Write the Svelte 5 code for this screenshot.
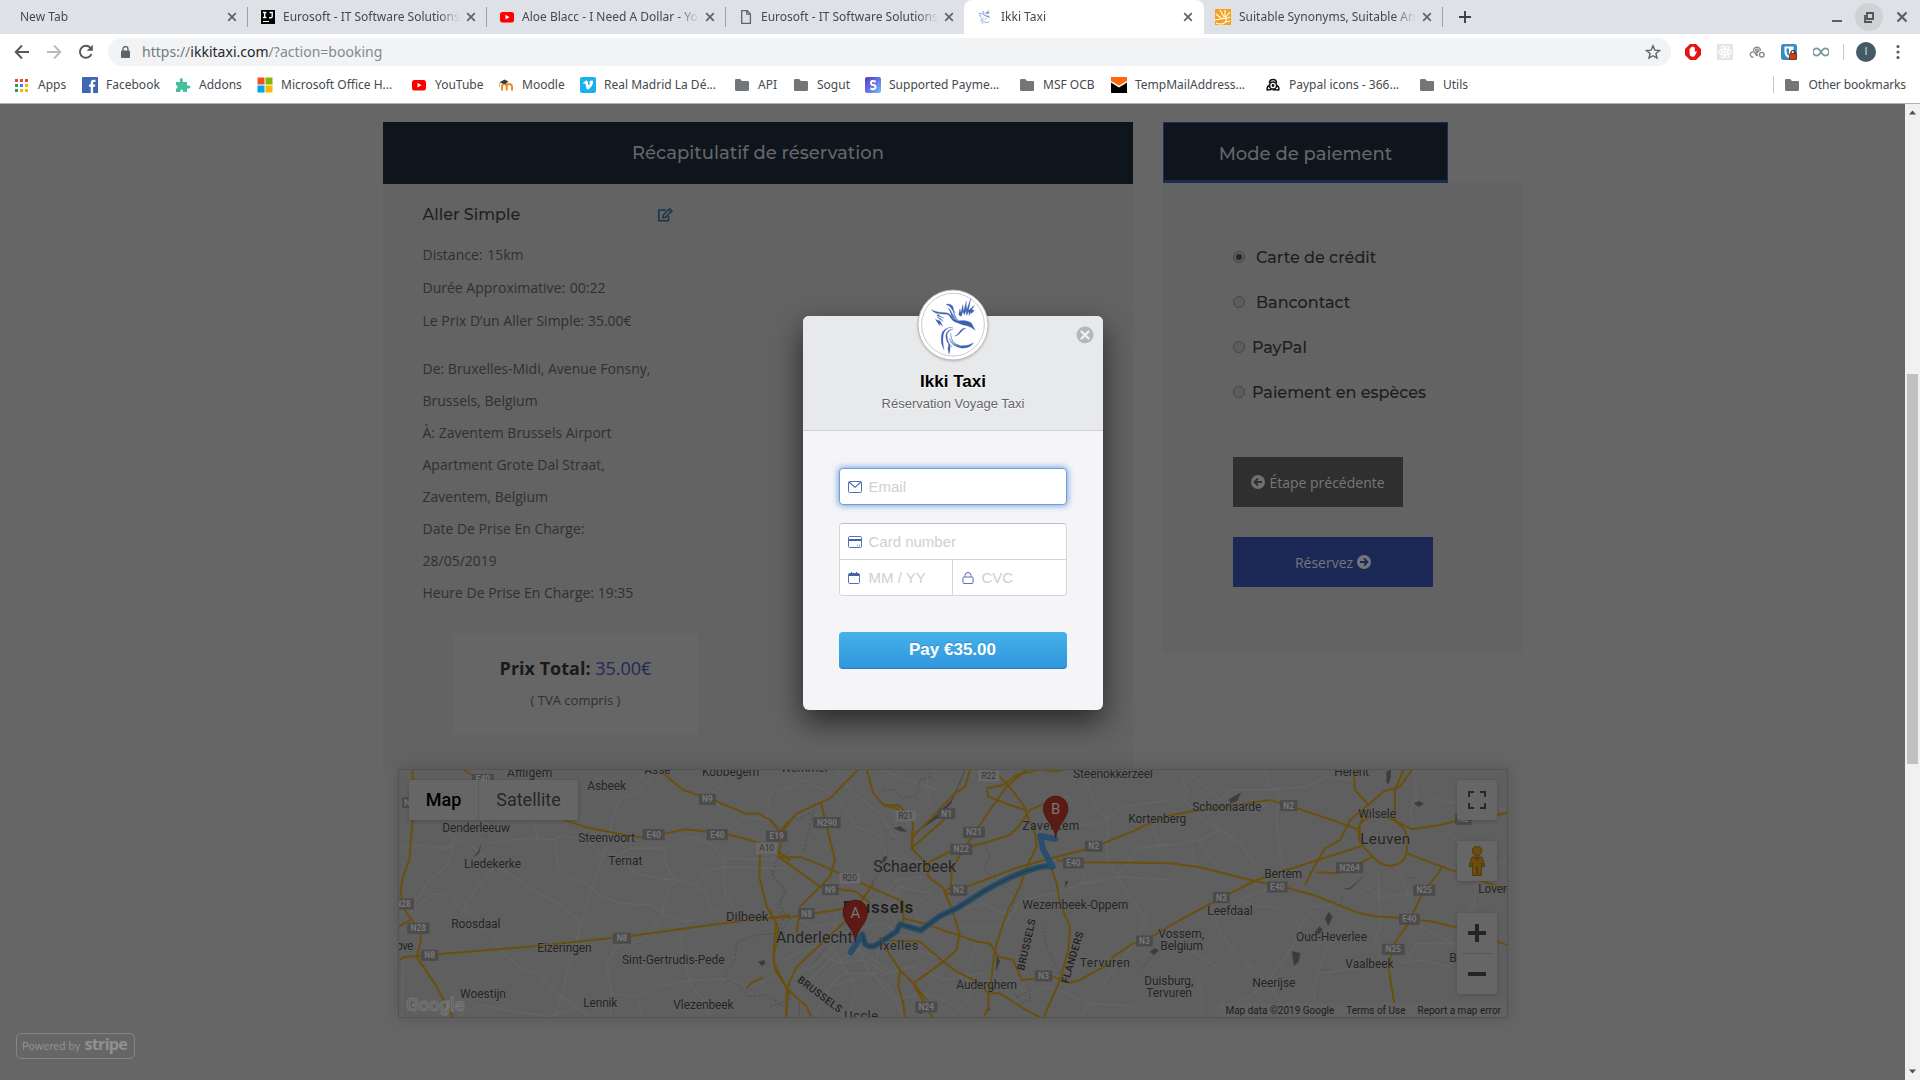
<script>
  const tabs = [
    { title: 'New Tab', icon: '' },
    { title: 'Eurosoft - IT Software Solutions a', icon: 'ij' },
    { title: 'Aloe Blacc - I Need A Dollar - You', icon: 'youtube' },
    { title: 'Eurosoft - IT Software Solutions a', icon: 'page' },
    { title: 'Ikki Taxi', icon: 'bird', active: true },
    { title: 'Suitable Synonyms, Suitable Ant', icon: 'sun' }
  ];

  const bookmarks = [
    { label: 'Apps', icon: 'apps', width: 68 },
    { label: 'Facebook', icon: 'facebook', width: 93 },
    { label: 'Addons', icon: 'puzzle', width: 82 },
    { label: 'Microsoft Office H...', icon: 'ms', width: 154 },
    { label: 'YouTube', icon: 'youtube', width: 87 },
    { label: 'Moodle', icon: 'moodle', width: 82 },
    { label: 'Real Madrid La Dé...', icon: 'vimeo', width: 154 },
    { label: 'API', icon: 'folder', width: 59 },
    { label: 'Sogut', icon: 'folder', width: 72 },
    { label: 'Supported Payme...', icon: 'stripe', width: 154 },
    { label: 'MSF OCB', icon: 'folder', width: 92 },
    { label: 'TempMailAddress...', icon: 'mail', width: 154 },
    { label: 'Paypal icons - 366...', icon: 'eye', width: 154 },
    { label: 'Utils', icon: 'folder', width: 60 }
  ];

  const trip = ['Distance:\u200415km', 'Durée Approximative:\u200400:22', 'Le Prix D’un Aller Simple: 35.00€'];
  const address = [
    'De: Bruxelles-Midi, Avenue Fonsny,',
    'Brussels, Belgium',
    'À: Zaventem Brussels Airport',
    'Apartment Grote Dal Straat,',
    'Zaventem, Belgium',
    'Date De Prise En Charge:',
    '28/05/2019',
    'Heure De Prise En Charge: 19:35'
  ];
  const methods = [
    { name: 'Carte de crédit', checked: true, wide: true },
    { name: 'Bancontact', wide: true },
    { name: 'PayPal' },
    { name: 'Paiement en espèces' }
  ];

  // The map is drawn as three sheets, each in thirds of a pixel.
  // label: [text, x, baseline, width, size]; shield: [text, centre x, centre y, width, light?]
  const sheets = [
    {
      x: 390, y: 760,
      minor: [
        'M790 45L740 100L690 120L670 170L640 290L600 400L560 540L520 680L495 775',
        'M130 260L185 262L195 235L160 210', 'M30 262L90 255L160 268L190 255', 'M195 235L250 262L300 310L360 340L400 370L460 410L510 430L575 490L560 540',
        'M300 250L350 240L440 235L432 180', 'M440 235L490 240L520 225L600 245L640 290', 'M495 240L505 320L540 355L590 370L630 405L690 430L780 435L820 460L880 485L920 480',
        'M640 270L700 310L740 340L800 355L850 360', 'M640 265L680 285L720 265L820 265L900 230L960 250L1000 295L1200 300', 'M820 265L830 320L855 360L910 370L950 400L960 440L1010 480',
        'M855 360L820 430L815 470L760 540L680 560L650 610L665 700L660 775', 'M910 380L950 335L1000 320L1190 325', 'M1000 295L1005 400L1035 450', 'M240 460L225 435L260 385L320 310',
        'M190 260L175 310L110 370L80 420L60 460', 'M80 440L130 402L180 404L210 440L235 465L310 530L340 580L400 630L440 640L500 700L560 740L600 775', 'M660 700L740 710L800 680L870 665L1000 655L1080 680L1190 640',
        'M740 710L760 775', 'M870 520L880 600L905 680L940 720L960 775', 'M770 35L740 60', 'M980 30L1000 70L960 110L1000 150', 'M1190 80L1140 100L1130 180L1060 170L1010 210', 'M200 770L270 735L380 755L480 770L560 740', 'M40 600L35 775'
      ],
      roads: [
        'M68 28L68 180L58 300L36 360L32 400L45 450L65 480L92 515L92 545L80 590L140 680L190 775', 'M26 500L65 478', 'M26 602L40 592L80 588', 'M80 588L440 558L720 528L1000 490L1200 466', 'M220 28L250 48L330 85L430 140L520 178L580 200L690 222L750 232L790 228L885 208L1000 220L1060 235L1110 250L1160 270L1200 303',
        'M820 40L840 58L880 90L975 122L1070 162L1105 160L1140 180L1170 215L1200 180', 'M1110 280L1108 350L1130 440L1160 490L1165 520L1150 590L1155 630L1195 690L1188 775', 'M1070 684L1085 668L1118 652'
      ],
      dashes: ['M1200 275L1160 300L1145 350L1190 390L1160 440L1180 480L1160 520L1100 525L1040 545L1035 600L1000 650L1050 680L1070 710L1130 705L1180 740'],
      lakes: ['M1105 605l18-4 2 10-10 6z', 'M1130 610l10 8', 'M250 292l16-18 6-18-4 22z', 'M285 232l10-14', 'M305 195l8-14'],
      labels: [
        ['Affligem', 351, 52, 136, 36], ['Asse', 763, 42, 79, 36], ['Kobbegem', 936, 49, 172, 36], ['Asbeek', 592, 91, 116, 36], ['Denderleeuw', 157, 217, 203, 36],
        ['Steenvoort', 565, 247, 170, 36], ['Liedekerke', 222, 325, 171, 36], ['Ternat', 655, 315, 102, 36], ['Roosdaal', 184, 505, 147, 36], ['Dilbeek', 1008, 483, 127, 39], ['ove', 18, 569, 52, 36],
        ['Eizeringen', 442, 575, 163, 36], ['Sint-Gertrudis-Pede', 696, 613, 308, 36], ['Woestijn', 210, 715, 138, 36], ['Lennik', 580, 742, 102, 36], ['Vlezenbeek', 850, 748, 181, 36]
      ],
      shields: [['E40', 279, 58, 66], ['N9', 952, 118, 50], ['E40', 791, 224, 66], ['E40', 982, 224, 64], ['E19', 1160, 229, 64], ['A10', 1130, 265, 64, true], ['N28', 66, 128, 60], ['N28', 39, 432, 66], ['N28', 85, 505, 66], ['N8', 119, 586, 52], ['N8', 696, 535, 54]]
    },
    {
      x: 770, y: 760,
      minor: [
        'M30 100L100 60L200 110L260 200L330 230L350 290L470 310', 'M200 28L240 90L330 160L380 240', 'M150 380L230 430L330 420L380 360L460 350', 'M40 600L130 560L200 610L280 600L350 640L430 620L520 660L640 640', 'M120 660L200 580L260 690L230 775', 'M260 560L300 640L360 680L400 775',
        'M300 640L180 680L130 775', 'M330 550L310 640L370 720L470 700L560 740', 'M480 400L430 440L450 490', 'M560 450L640 430L700 460L760 420L850 400L940 370L1040 350L1200 360', 'M930 320L950 370L1040 350L1010 280L1015 180L970 130L940 28', 'M1040 350L1100 270L1180 250',
        'M1040 350L1130 480L1080 570L990 680', 'M870 130l20-25 15 20-20 25', 'M620 550L590 640L600 720L540 775', 'M700 660L780 700L840 680L960 730L1100 740', 'M960 730L930 775', 'M470 60L480 130L410 200', 'M330 28L420 60L500 90', 'M160 700L220 640L330 640', 'M420 560L520 600L560 570', 'M570 500L700 500L740 440', 'M870 200L990 190L1060 140L1200 120',
        'M400 370L370 430L300 450L260 520L150 550', 'M200 460L190 560L130 620L60 650', 'M380 490L350 430L390 380L480 400', 'M220 520L330 490L380 510', 'M180 620L270 570L370 640L420 620', 'M60 470L130 500L200 490'
      ],
      roads: [
        'M0 475L70 470L215 447L270 430', 'M265 28L180 115L80 160L40 210L25 290L95 340L150 380L260 395L300 430', 'M0 180L20 200', 'M25 292L95 292L170 322L270 368L400 425L400 485', 'M152 125L170 200L195 300L180 350L90 440L80 520', 'M0 450L18 490L12 560L12 610L50 685L110 740L125 775', 'M48 775L50 685L80 620L240 470L290 400L310 370',
        'M290 28L310 100L340 135L380 145L430 190L425 240L430 270L470 310L475 350L520 385L550 460L568 520L560 570L520 605L430 670L440 690L490 775', 'M600 28L585 80L555 100L425 235', 'M425 265L555 150', 'M770 28L710 80L660 150L570 285L545 330L542 380L525 395', 'M475 308L540 275L640 250L720 225L745 200L780 150L820 132',
        'M650 90L655 110L720 135L765 150L795 220L800 260L770 320L750 380L710 460L680 550L670 600L665 650L655 700L655 740L640 775', 'M670 28L730 95L770 150', 'M650 85L700 75L740 45L810 28', 'M810 28L860 35L880 28', 'M525 405L590 380L750 320L860 290L960 265L1000 250L1110 205', 'M860 300L900 307L1110 308',
        'M400 475L460 490L620 545L660 550L685 590L730 600L755 660L800 655L850 650L900 668L930 660L1020 610L1030 590L1090 550L1145 532', 'M330 530L350 570L390 630L385 680L400 730L405 775', 'M390 630L430 670L470 720', 'M340 540L450 545L520 605L560 635L620 665L655 700L690 700L760 745L815 775', 'M845 325L860 370L870 430L900 500L895 570L870 660L820 775',
        'M430 200L425 270', 'M340 135L385 135L430 180'
      ],
      dashes: ['M0 330L45 390L30 440L60 480L20 520L0 540', 'M340 90L370 90L400 115L440 105L450 60L480 50L480 28', 'M640 250L660 290L640 330L690 370L740 410L720 460', 'M820 500L830 560L870 640', 'M80 180L130 155L100 280', 'M740 710L780 690L780 720L750 730', 'M0 740L60 720L60 660'],
      lakes: ['M372 205l20-6 18 16-20-2z', 'M585 30l-42 100-40 44-68 44 64-52 48-48z', 'M130 612l40-52', 'M338 322l-34 52', 'M352 288l-12 4-4 18 10-6z', 'M680 590l10 12-12 30z', 'M340 214l12 2M365 236l12 2', 'M735 705l10 14M886 382l8-18h-8z', 'M655 735l4 16-6 2zM88 720v54', 'M440 755l20 2-10 4z', 'M650 552l14 6'],
      labels: [
        ['Wemmel', 32, 36, 140, 36], ['Steenokkerzeel', 909, 55, 240, 36], ['Schaerbeek', 310, 337, 248, 48], ['Zaventem', 757, 211, 171, 36], ['Kortenberg', 1075, 190, 174, 36], ['Anderlecht', 18, 550, 230, 47], ['Ixelles', 328, 571, 117, 38],
        ['Wezembeek-Oppem', 757, 448, 318, 36], ['Auderghem', 559, 688, 182, 36], ['Tervuren', 929, 622, 151, 36], ['Uccle', 223, 780, 101, 38]
      ],
      shields: [['N290', 171, 188, 82], ['R21', 407, 168, 62, true], ['N1', 530, 161, 52], ['R22', 656, 48, 64, true], ['N21', 612, 217, 66], ['N22', 574, 268, 66], ['N2', 971, 259, 52], ['E40', 910, 309, 62], ['R20', 239, 355, 62, true], ['N9', 181, 389, 50], ['N2', 566, 391, 52], ['N8', 110, 461, 48], ['N3', 821, 648, 52], ['N3', 1123, 543, 50], ['N24', 469, 741, 66]],
      route: true
    },
    {
      x: 1140, y: 760,
      minor: [
        'M145 30L125 65L145 90L135 120L180 170L270 230L300 250L350 320', 'M150 40L240 120L270 90L380 90L500 80L560 50L640 60', 'M375 30L395 80L415 90L410 180L420 280L435 340', 'M395 120L330 170L270 230', 'M0 260L100 255L175 240L240 210L270 230', 'M175 240L210 290L250 340', 'M35 200L55 240L50 260', 'M155 250L165 330',
        'M300 420L350 440L410 440L480 500L460 560L400 640L380 665L430 740L430 775', 'M300 420L350 400L400 380', 'M225 470L240 520L290 580L380 665L330 710L250 740L215 775', 'M120 540L180 590L230 620', 'M170 640L185 700L185 775', 'M620 500L560 560L540 620L520 680L530 775', 'M540 640L640 625L700 620', 'M715 340L720 500L700 560', 'M770 320L790 360L820 440', 'M840 500L940 550L1000 540', 'M805 590L830 550L930 550L1000 580',
        'M780 610L850 600L930 620', 'M870 110L920 130L990 120L1100 150', 'M820 30L830 100L810 160L820 200', 'M1010 370L1000 440L960 500L950 560', 'M930 220L1000 300L1100 310', 'M640 420L680 380L720 410L840 400', 'M480 500L520 440L600 430'
      ],
      roads: [
        'M-10 207L30 190L80 168L150 155L390 120L475 145L660 210', 'M-10 308L90 310L180 322L340 362L430 380L520 405L660 460L700 468L790 475L880 485L960 505L1110 558', 'M30 533L120 480L270 400L350 360L440 330L540 298L665 258', 'M640 30L645 90L685 135', 'M815 30L780 80L730 95L690 130L630 180L600 240L555 265L520 325L495 375', 'M790 30L765 90L765 180', 'M530 337L590 340L700 290',
        'M680 150C650 200 640 240 690 280C730 340 800 320 800 270C810 220 790 190 740 170', 'M660 190L690 170', 'M740 170L780 190L815 208L900 195L950 182L1110 158', 'M800 280L905 320L960 340L1110 392', 'M905 320L895 340L850 395L805 490L760 555L745 620L770 775', 'M660 200L660 250'
      ],
      dashes: [],
      lakes: ['M268 118l34-20-10 24-20 8z', 'M740 35l12-5v18l-6 24-6-4z', 'M822 130l14-6 14 6-12 10z', 'M456 574l24 6-4 26-14 10z', 'M555 475l12-18 10 14-12 26z', 'M525 515l14-16 8 12-10 12z', 'M30 575l14-10 12 6-14 14z', 'M610 388l20-4 38-34-36 36z', 'M600 435l8-26M810 352l20 2M540 632l30-4M0 630l40-42'],
      labels: [
        ['Schoonaarde', 157, 154, 207, 36], ['Herent', 583, 47, 104, 36], ['Wilsele', 655, 174, 113, 36], ['Leuven', 661, 253, 150, 46], ['Bertem', 373, 355, 113, 36], ['Leefdaal', 202, 465, 136, 36], ['Vossem,', 55, 535, 137, 36], ['Belgium', 61, 571, 128, 36],
        ['Oud-Heverlee', 468, 543, 213, 36], ['Vaalbeek', 616, 624, 145, 36], ['Neerijse', 337, 682, 129, 36], ['Duisburg,', 13, 676, 147, 36], ['Tervuren', 19, 712, 137, 36], ['Lovenjoel', 1015, 400, 148, 36], ['Bierbeek', 928, 607, 135, 36]
      ],
      shields: [['N2', 446, 137, 52], ['N264', 629, 323, 82], ['E40', 412, 381, 62], ['N3', 244, 413, 50], ['N25', 853, 391, 66], ['E40', 808, 478, 62], ['N25', 760, 568, 68], ['N2', 970, 178, 50]]
    }
  ];
</script>

{#snippet bird()}
  <g fill="#3f5fb0" stroke="#3f5fb0" stroke-width=".8" stroke-linejoin="round">
    <path d="M423 90Q442 99 468 99Q480 101 487 112Q493 122 506 123Q522 120 538 126Q546 129 548 136L556 152Q544 142 534 139Q516 136 502 129Q488 126 482 114Q477 104 468 103Q452 104 438 99Q452 112 462 115L440 108L447 105Q430 98 423 90z" />
    <path d="M436 119l14 5 8 15-11-8 2 8zM440 111q12 4 20 14l-12-7z" />
    <path d="M468 73Q486 71 490 84Q488 90 495 99Q487 94 483 84Q477 76 468 73zM474 84Q484 90 488 104Q493 116 506 122Q490 118 484 106Q481 94 474 84zM490 92q3 14 10 24q-10-8-10-24z" />
    <path d="M506 105l4-18 3 12 6-25 2 22 8-32 1 27 13-36-7 37 18-16-8 14 8 2-9 9-2-4-5 11-1-13-7 12-1-15-6 13-4-10-5 15z" />
    <path d="M494 170Q504 166 512 152Q518 144 528 146Q517 150 512 159Q505 169 494 170z" />
    <path d="M488 143Q466 142 460 164Q456 184 462 211Q450 190 454 166Q460 142 488 143z" />
    <path d="M490 148Q474 152 471 166Q470 186 486 203Q467 190 467 168Q472 148 490 148zM482 160Q482 192 512 199Q536 200 551 190Q542 207 514 206Q484 200 478 176Q488 198 512 202Q480 192 482 160z" />
    <path d="M476 192q8 12 1 32q-6-16-1-32z" />
  </g>
{/snippet}

{#snippet icon(name)}
  <svg class="fav" viewBox="0 0 16 16">
    {#if name === 'ij'}
      <rect x="1" y="1" width="14" height="14" fill="#000" /><path d="M3 3.500h3.400M4.700 3.500v5M3 8.500h3.400M9.500 3.500h2.700v4q0 1.300-1.500 1.300H9" stroke="#fff" stroke-width="1.400" fill="none" /><path d="M3 12.500h6" stroke="#fff" />
    {:else if name === 'youtube'}
      <rect x="1" y="3" width="14" height="10.500" rx="2.500" fill="#f00" /><path d="M6.500 5.800l4 2.400-4 2.400z" fill="#fff" />
    {:else if name === 'page'}
      <path d="M3.700 1.700h5.500l3.200 3.200v9.400H3.700zM8.800 1.700v3.500h3.600" fill="none" stroke="#5f6368" stroke-width="1.300" />
    {:else if name === 'bird'}
      <svg x="0" y="0" width="16" height="16" viewBox="410 50 160 180" opacity=".75">{@render bird()}</svg>
    {:else if name === 'sun'}
      <rect width="16" height="16" fill="#f5a11c" /><path d="M0 11l6-1M1 5l6 5M5 1l4 7M10 1v7M15 3l-5 6M15 8l-5 2M15 12l-4 1M1 14c5 2 9 1 10-2 1-3-3-3-4-2" stroke="#fff" stroke-width="1.100" fill="none" />
    {:else if name === 'apps'}
      {#each [0, 1, 2] as r}{#each [0, 1, 2] as c}
        <rect x={1 + c * 5} y={2 + r * 5} width="3" height="3" fill={[['#e8453c', '#e8453c', '#e8453c'], ['#2e9b57', '#3f83f2', '#f2b50c'], ['#2e9b57', '#f2b50c', '#f2b50c']][r][c]} />
      {/each}{/each}
    {:else if name === 'facebook'}
      <rect width="16" height="16" rx=".6" fill="#4267b2" /><path d="M8.700 16V9.800H7V7.500h1.700V5.800c0-2 1.100-3 2.900-3h1.800v2.300h-1.200c-.8 0-1.100.4-1.100 1.100v1.300h2.200l-.3 2.300h-1.900V16z" fill="#fff" />
    {:else if name === 'puzzle'}
      <path d="M1 5h4V3q-.2-2 1.300-2T7.700 3v2H12v3.500h1.500q2 0 2 1.500t-2 1.500H12V15H8v-1.500q-1.500-2-2.700 0V15H1v-3.500h1q1.600-1.500 0-3H1z" fill="#42bf9b" />
    {:else if name === 'ms'}
      <path d="M.5.500h7v7h-7z" fill="#f35022" /><path d="M8.500.5h7v7h-7z" fill="#7fba00" /><path d="M.5 8.500h7v7h-7z" fill="#00a3ee" /><path d="M8.500 8.500h7v7h-7z" fill="#ffb800" />
    {:else if name === 'moodle'}
      <path d="M4 13.500V9.500Q4.200 7 6.300 7t2.400 2.500v4M8.700 9.500Q8.900 7 11.200 7t2.800 2.500v4" fill="none" stroke="#f0882c" stroke-width="2" /><path d="M1.500 5.500l5-3 4 2-3 2.500-3-.6z" fill="#3a3a3a" /><path d="M1.500 6v4" stroke="#d9a774" />
    {:else if name === 'vimeo'}
      <rect width="16" height="16" rx="2" fill="#1ab1ed" /><path d="M3 6l3-2.500c1.800-.6 1.800 2 2.300 4 .4 1.700 1.700-.8 1.700-1.600 0-.6-.7-.4-1-.3.600-2 4.400-3.300 4.100 0-.3 2.500-3.700 6.900-5.100 6.900-2.300 0-2-7-3.200-6.200l-1 .6z" fill="#fff" />
    {:else if name === 'folder'}
      <path d="M1 3.200Q1 2 2.200 2h4l1.700 2h6q1.100 0 1.100 1.200v7.600q0 1.200-1.200 1.200H2.200Q1 14 1 12.800z" fill="#737679" />
    {:else if name === 'stripe'}
      <linearGradient id="sg" x1="0" y1="0" x2="1" y2="1"><stop stop-color="#5a3bb5" /><stop offset=".5" stop-color="#6772e5" /><stop offset="1" stop-color="#6ec0ff" /></linearGradient>
      <rect width="16" height="16" rx="2" fill="url(#sg)" /><path d="M10.800 4.600Q6 3 6 5.500T8.400 8t2 2.600-5 .9" stroke="#fff" stroke-width="2" fill="none" />
    {:else if name === 'mail'}
      <rect width="16" height="16" fill="#000" /><path d="M0 0h16v4.500L8 9.500 0 4.500z" fill="#ff6b0a" /><path d="M0 4.700l8 5 8-5" stroke="#fff" stroke-width="1.400" fill="none" />
    {:else if name === 'eye'}
      <path d="M4.500 6Q4.500 2.500 8 2.500T11.500 6" stroke="#111" stroke-width="1.500" fill="none" /><circle cx="8" cy="8.500" r="3.600" fill="none" stroke="#111" stroke-width="1.500" /><circle cx="8" cy="8.500" r="1.400" fill="#111" /><path d="M4 8.500q-2.500 1.500-1.700 4.500l4-.6M12 8.500q2.500 1.500 1.700 4.500l-6-.3" fill="none" stroke="#111" stroke-width="1.500" />
    {/if}
  </svg>
{/snippet}

{#snippet cross()}
  <svg class="cross" viewBox="0 0 10 10"><path d="M1.200 1.200l7.600 7.600M8.800 1.200L1.200 8.800" stroke="#5f6368" stroke-width="1.700" /></svg>
{/snippet}

<div class="screen">
  <div class="strip">
    {#each tabs as t, i}
      <div class="tab" class:active={t.active} class:first={i === 0} class:quiet={i === 3} class:last={i === 5}>
        {#if t.icon}{@render icon(t.icon)}{/if}
        <span class="title">{t.title}</span>
        {@render cross()}
      </div>
    {/each}
    <svg class="plus" viewBox="0 0 12 12"><path d="M6 0v12M0 6h12" stroke="#3c4043" stroke-width="1.900" /></svg>
    <div class="controls">
      <svg viewBox="0 0 28 28"><path d="M10 18h10" stroke="#5b5e62" stroke-width="2" /></svg>
      <svg viewBox="0 0 28 28"><circle cx="14" cy="14" r="14" fill="#cfd1d5" /><path d="M12 10h6v6h-6zM10 12v7h7" fill="none" stroke="#4f5256" stroke-width="1.800" /></svg>
      <svg viewBox="0 0 28 28"><path d="M9.500 9.500l9 9M18.500 9.500l-9 9" stroke="#5b5e62" stroke-width="2.200" /></svg>
    </div>
  </div>

  <div class="toolbar">
    <div class="nav">
      <svg viewBox="0 0 16 16"><path d="M15 8H2M8 1.500L1.700 8 8 14.500" fill="none" stroke="#54575b" stroke-width="1.900" /></svg>
      <svg viewBox="0 0 16 16"><path d="M1 8h13M8 1.500L14.300 8 8 14.500" fill="none" stroke="#b9bbbe" stroke-width="1.900" /></svg>
      <svg viewBox="0 0 16 16"><path d="M13.500 10A6 6 0 1 1 12.300 3.700" fill="none" stroke="#54575b" stroke-width="1.900" /><path d="M14.800.800v6H8.700z" fill="#54575b" /></svg>
    </div>
    <div class="omni">
      <svg class="lock" viewBox="0 0 9 12"><rect y="4.500" width="9" height="7.500" rx="1" fill="#5f6368" /><path d="M2 5V3a2.500 2.500 0 0 1 5 0v2" fill="none" stroke="#5f6368" stroke-width="1.300" /></svg>
      <span class="url">https://<b>ikkitaxi.com</b><i>/?action=booking</i></span>
      <svg class="star" viewBox="0 0 16 16"><path d="M8 1.800l1.800 4.300 4.700.4-3.600 3 1.100 4.600L8 11.700l-4 2.400 1.100-4.600-3.600-3 4.700-.4z" fill="none" stroke="#5f6368" stroke-width="1.400" /></svg>
    </div>
    <div class="exts">
      <svg viewBox="0 0 16 16"><path d="M5 0h6l5 5v6l-5 5H5l-5-5V5z" fill="#e31414" /><path d="M4.500 8V4.500h1.300V7 3h1.300v4-4.500h1.300V7 3.300h1.400v5l1.200-1.300.9.700-2.400 4.600q-2 1.200-4-.3-1-1-1-4z" fill="#fff" /></svg>
      <svg viewBox="0 0 16 16"><rect width="16" height="16" fill="#e4e4e4" /><g fill="none" stroke="#fff" stroke-width="1.100"><ellipse cx="8" cy="8" rx="6.500" ry="2.600" /><ellipse cx="8" cy="8" rx="6.500" ry="2.600" transform="rotate(60 8 8)" /><ellipse cx="8" cy="8" rx="6.500" ry="2.600" transform="rotate(120 8 8)" /></g><circle cx="8" cy="8" r="1.300" fill="#fff" /></svg>
      <svg viewBox="0 0 16 16"><g fill="none" stroke="#8b8b8b" stroke-width="1.400"><path d="M4.600 13a2.600 2.600 0 1 1 1.700-3.500L8 12M4.500 6.800a3.500 3.500 0 0 1 7 0M8.500 12L7.500 9l3-2.500" /><circle cx="12.800" cy="10.700" r="2.300" /><circle cx="8" cy="6.500" r="1.300" /></g></svg>
      <svg viewBox="0 0 16 16"><rect width="16" height="16" rx="2.500" fill="#3b8cc0" /><path d="M3.500 2.500h9V8q0 4-4.500 6-4.500-2-4.500-6z" fill="#fff" /><path d="M5.500 4.500H8v7.300Q5.500 10.500 5.500 8z" fill="#3b8cc0" /><rect x="8.500" y="9.500" width="7" height="6.300" rx="1" fill="#d83a0c" stroke="#42210b" stroke-width=".7" /><path d="M10 9.500V8.500a2 2 0 0 1 4 0v1" fill="none" stroke="#42210b" stroke-width="1.200" /></svg>
      <svg viewBox="0 0 16 16"><path d="M8 8C6 4.800 4.800 4.400 3.700 4.400a3.600 3.600 0 0 0 0 7.200C4.800 11.600 6 11.200 8 8s3.200-3.600 4.300-3.600a3.600 3.600 0 0 1 0 7.200C11.200 11.600 10 11.200 8 8z" fill="none" stroke="#7d979f" stroke-width="1.700" /></svg>
    </div>
    <span class="bar"></span>
    <span class="me">I</span>
    <svg class="dots" viewBox="0 0 4 16"><g fill="#5b5e62"><circle cx="2" cy="2.500" r="1.600" /><circle cx="2" cy="8" r="1.600" /><circle cx="2" cy="13.500" r="1.600" /></g></svg>
  </div>

  <div class="marks">
    {#each bookmarks as b}
      <div class="mark" style="width: {b.width}px">{@render icon(b.icon)}<span>{b.label}</span></div>
    {/each}
    <div class="mark other">{@render icon('folder')}<span>Other bookmarks</span></div>
  </div>

  <div class="view">
    <main>
      <div class="cols">
        <section class="recap">
          <h2>Récapitulatif de réservation</h2>
          <div class="trip">
            <div class="way">
              <span>Aller Simple</span>
              <svg viewBox="0 0 16 14"><path d="M9 2H1.800v10.800H11.500V8" fill="none" stroke="#17344a" stroke-width="1.500" /><path d="M5.800 9.800l.5-2.800L12.700.8l2.300 2.200-6.500 6.300z" fill="none" stroke="#17344a" stroke-width="1.400" /><path d="M11.300 2.200l2.200 2.200" stroke="#17344a" /></svg>
            </div>
            {#each trip as line}<p class="tall">{line}</p>{/each}
            <div class="address">{#each address as line}<p>{line}</p>{/each}</div>
          </div>
          <div class="total">
            <p class="sum"><b>Prix Total:</b> <span>35.00€</span></p>
            <p class="vat">( TVA compris )</p>
          </div>
        </section>
        <section class="pay">
          <h2>Mode de paiement</h2>
          <div class="options">
            {#each methods as m}
              <div class="option" class:wide={m.wide}>
                <span class="radio" class:checked={m.checked}></span><span>{m.name}</span>
              </div>
            {/each}
            <div class="btn back">
              <svg viewBox="0 0 14 14"><circle cx="7" cy="7" r="7" fill="#707070" /><path d="M11 7H4M7 3.500L3.500 7 7 10.500" fill="none" stroke="#2f2f2f" stroke-width="1.800" /></svg>
              <span>Étape précédente</span>
            </div>
            <div class="btn book">
              <span>Réservez</span>
              <svg viewBox="0 0 14 14"><circle cx="7" cy="7" r="7" fill="#747679" /><path d="M3 7h7M7 3.500L10.500 7 7 10.500" fill="none" stroke="#1c2956" stroke-width="1.800" /></svg>
            </div>
          </div>
        </section>
      </div>

      <div class="map">
        <svg class="canvas" viewBox="399 770 1108 247">
          {#each sheets as s}
            <g transform="translate({s.x} {s.y}) scale(.33333)" fill="none">
              <g stroke="#656565" stroke-width="4.500">{#each s.minor as d}<path {d} />{/each}</g>
              <g stroke="#4a4a4a" stroke-width="2.500" stroke-dasharray="7 6">{#each s.dashes as d}<path {d} />{/each}</g>
              <g fill="#3c3c3c" stroke="#3c3c3c" stroke-width="1">{#each s.lakes as d}<path {d} />{/each}</g>
              <g stroke="#6a500b" stroke-width="6" stroke-linejoin="round">{#each s.roads as d}<path {d} />{/each}</g>
            </g>
          {/each}
          {#each sheets as s}
            <g transform="translate({s.x} {s.y}) scale(.33333)">
              {#each s.shields as [t, x, y, w, light]}
                <rect x={x - w / 2} y={y - 16.500} width={w} height="33" fill={light ? '#696969' : '#4b4b4b'} />
                <text class="shield" class:light x={x} y={y + 9}>{t}</text>
              {/each}
              {#if s.route}
                <g fill="none" stroke-linejoin="round" stroke-linecap="round">
                  <path d="M242 577L277 523L285 552Q304 568 330 548L380 514L390 493L452 511L510 468L560 445L640 395Q750 330 830 318L848 320L820 270L810 228L856 237" stroke="#284e6d" stroke-width="18" />
                  <path d="M277 523L285 552Q304 568 330 548L380 514L390 493L452 511L510 468L560 445L640 395Q750 330 830 318" stroke="#27404a" stroke-width="6" />
                </g>
              {/if}
              <g class="places">
                {#each s.labels as [t, x, y, w, size]}
                  <text {x} {y} textLength={w} font-size={size}>{t}</text>
                {/each}
              </g>
              {#if s.route}
                <text class="city" x="218" y="458" textLength="212">Brussels</text>
                <text class="edge" transform="translate(80 664) rotate(37)" textLength="158">BRUSSELS</text>
                <text class="edge" transform="translate(762 633) rotate(-77)" textLength="157">BRUSSELS</text>
                <text class="edge" transform="translate(894 672) rotate(-73)" textLength="160">FLANDERS</text>
                {#each [['A', 256, 457], ['B', 857, 145]] as [t, x, y]}
                  <g transform="translate({x} {y})">
                    <path d="M0 88C-4 50-37 32-37 0A37 37 0 0 1 37 0C37 32 4 50 0 88z" fill="#5c1a15" stroke="#45120f" stroke-width="2" />
                    <text class="pin" y="16">{t}</text>
                  </g>
                {/each}
              {/if}
            </g>
          {/each}
        </svg>
        <div class="kinds"><b>Map</b><span>Satellite</span></div>
        <svg class="google" viewBox="0 0 64 24"><text x="1" y="17">Google</text></svg>
        <div class="tile full"><svg viewBox="0 0 18 18"><path d="M1 6V1h5M12 1h5v5M17 12v5h-5M6 17H1v-5" fill="none" stroke="#272727" stroke-width="2" /></svg></div>
        <div class="tile man"><svg viewBox="0 0 18 30"><circle cx="9" cy="5" r="4.800" fill="#6b4d10" stroke="#4c3508" stroke-width=".8" /><path d="M4 11h10l3 9-2 1-1.500-4v12.500h-4V21h-1v8.500h-4V17L3 21l-2-1z" fill="#6b4d10" stroke="#4c3508" stroke-width=".8" /><path d="M6 11h6l-3 4z" fill="#6a2e10" /></svg></div>
        <div class="tile zoom"><svg viewBox="0 0 40 81"><path d="M11 20h18M20 11v18M11 61h18" stroke="#242424" stroke-width="4" /><path d="M5 40.500h30" stroke="#575757" /></svg></div>
        <div class="legal"><span>Map data ©2019 Google</span><span>Terms of Use</span><span>Report a map error</span></div>
      </div>
    </main>

    <div class="scroll">
      <svg viewBox="0 0 15 17"><path d="M4 10.500h7L7.500 6.500z" fill="#505050" /></svg>
      <div class="thumb"></div>
      <svg viewBox="0 0 15 17"><path d="M4 6.500h7l-3.500 4z" fill="#505050" /></svg>
    </div>

    <div class="powered"><span>Powered by</span><b>stripe</b></div>

    <div class="modal">
      <svg class="logo" viewBox="380 27 218 218">
        <circle cx="489" cy="136" r="106" fill="#fff" stroke="#b9babb" stroke-width="3" />
        <circle cx="489" cy="135" r="95" fill="none" stroke="#c9cacb" stroke-width="3" />
        {@render bird()}
      </svg>
      <svg class="close" viewBox="0 0 18 18"><circle cx="9" cy="9.800" r="8.200" fill="#fff" opacity=".8" /><circle cx="9" cy="9" r="8.500" fill="#b5b6b8" /><path d="M5.500 5.500l7 7M12.500 5.500l-7 7" stroke="#f2f2f4" stroke-width="2.400" stroke-linecap="round" /></svg>
      <header>
        <h1>Ikki Taxi</h1>
        <p>Réservation Voyage Taxi</p>
      </header>
      <div class="form">
        <div class="field email">
          <svg viewBox="0 0 14 12"><rect x=".5" y=".5" width="13" height="11" rx="1.200" fill="#fff" stroke="#5470b6" /><path d="M1 1l6 5.300L13 1" fill="none" stroke="#4864ae" stroke-width="1.100" /></svg>
          <span>Email</span>
        </div>
        <div class="card">
          <div class="field">
            <svg viewBox="0 0 14 12"><rect x=".5" y=".5" width="13" height="11" rx="1.200" fill="#fff" stroke="#5470b6" /><path d="M1 4h12" stroke="#4360aa" stroke-width="1.800" /><path d="M9.500 8.500v2M11.500 8.500v2" stroke="#9caad3" /></svg>
            <span>Card number</span>
          </div>
          <div class="pair">
            <div class="field">
              <svg viewBox="0 0 14 12"><rect x=".5" y="1.500" width="11" height="10" rx="1.200" fill="#fff" stroke="#5470b6" /><path d="M.8 2.800h10.400" stroke="#4360aa" stroke-width="2.400" /><path d="M3.500 0v2M8.500 0v2" stroke="#4360aa" /></svg>
              <span>MM / YY</span>
            </div>
            <div class="field cvc">
              <svg viewBox="0 0 14 12"><rect x="2" y="5" width="10" height="6.500" rx="1" fill="#fff" stroke="#5470b6" /><path d="M4 5V3.300a3 2.800 0 0 1 6 0V5" fill="none" stroke="#5470b6" /></svg>
              <span>CVC</span>
            </div>
          </div>
        </div>
        <div class="submit">Pay €35.00</div>
      </div>
    </div>
  </div>
</div>

<style>
  :global(body) { margin: 0; overflow: hidden; }
  .screen { width: 1920px; height: 1080px; display: flex; flex-direction: column; background: #fff; font-family: 'Noto Sans', sans-serif; overflow: hidden; }
  .screen * { box-sizing: border-box; }
  svg { display: block; flex: none; }
  p, h1, h2 { margin: 0; font-weight: 400; }

  .strip { height: 34px; display: flex; align-items: center; background: #dee1e6; padding-left: 8px; flex: none; }
  .tab { width: 239px; height: 34px; display: flex; align-items: center; padding: 0 11px 0 12px; font-size: 12px; color: #45494d; position: relative; }
  .tab::after { content: ''; position: absolute; right: 0; top: 7px; width: 1px; height: 20px; background: #9da0a5; }
  .tab.active::after, .tab.quiet::after { display: none; }
  .tab.quiet { width: 238px; padding-right: 10px; }
  .tab.active { background: #fff; border-radius: 8px 8px 0 0; width: 240px; }
  .tab .title { margin-left: 7px; flex: 1; white-space: nowrap; overflow: hidden; line-height: 20px; margin-right: 6px; -webkit-mask-image: linear-gradient(90deg, #000 88%, transparent); }
  .tab.active .title { margin-left: 9px; }
  .tab.last { padding-left: 11px; }
  .tab.last .title { margin-left: 8px; }
  .tab.first { width: 240px; }
  .tab.first .title { margin-left: 0; }
  .fav { width: 16px; height: 16px; }
  .cross { width: 10px; height: 10px; }
  .plus { width: 12px; height: 12px; margin-left: 16px; }
  .controls { margin-left: auto; display: flex; gap: 5px; padding-right: 4px; }
  .controls svg { width: 28px; height: 28px; }

  .toolbar { height: 35px; flex: none; display: flex; align-items: center; padding: 0 14px; }
  .nav { display: flex; gap: 16px; width: 94px; }
  .nav svg { width: 16px; height: 16px; }
  .omni { width: 1563px; height: 28px; border-radius: 14px; background: #f1f3f4; display: flex; align-items: center; padding: 0 10px 0 13px; }
  .lock { width: 9px; height: 12px; }
  .url { margin-left: 12px; font-size: 14px; line-height: 20px; color: #757a7f; flex: 1; letter-spacing: .01px; }
  .url b { font-weight: 400; color: #24272a; }
  .url i { font-style: normal; color: #85898d; }
  .star { width: 16px; height: 16px; }
  .exts { display: flex; gap: 16px; margin-left: 14px; }
  .exts svg { width: 16px; height: 16px; }
  .bar { width: 1px; height: 16px; background: #c6c8ca; margin-left: 14px; }
  .me { width: 20px; height: 20px; border-radius: 50%; background: #455a64; color: #d7dde0; font: 11px/20px Roboto, sans-serif; text-align: center; margin-left: 12px; }
  .dots { width: 4px; height: 16px; margin-left: 20px; }

  .marks { height: 35px; flex: none; display: flex; align-items: center; padding: 0 14px 3px 14px; border-bottom: 1px solid #b0b1b2; font-size: 12px; color: #45494d; }
  .mark { display: flex; align-items: center; gap: 8px; white-space: nowrap; flex: none; }
  .mark.other { margin-left: auto; border-left: 1px solid #c6c8ca; padding-left: 10px; letter-spacing: -.12px; }

  .view { flex: 1; display: flex; position: relative; background: #666; overflow: hidden; }
  main { width: 1905px; padding-top: 18px; }
  .cols { display: flex; gap: 30px; padding-left: 383px; height: 647px; align-items: flex-start; }
  .recap { width: 750px; height: 647px; background: #636363; font-family: 'Open Sans', sans-serif; color: #303030; }
  h2 { font-family: Montserrat, Inter, sans-serif; color: #646668; background: #0e151c; text-align: center; font-size: 18px; font-weight: 500; }
  .recap h2 { height: 62px; line-height: 62px; }
  .trip { padding: 20px 0 0 39.500px; font-size: 14px; }
  .way { display: flex; align-items: center; height: 20px; width: 250px; justify-content: space-between; font: 500 16px Montserrat, Inter, sans-serif; color: #1f1f1f; margin-bottom: 14px; }
  .way svg { width: 16px; height: 14px; margin-top: 2px; }
  .tall { line-height: 33px; }
  .trip p { white-space: nowrap; }
  .address { margin-top: 16px; line-height: 32px; }
  .total { width: 245px; height: 100px; margin: 25px 0 0 70px; background: #666; text-align: center; padding-top: 20px; }
  .sum { font-size: 18px; line-height: 28px; color: #1a1a1a; }
  .sum span { color: #1f2a58; }
  .vat { font-size: 13px; line-height: 36px; }

  .pay { width: 360px; }
  .pay h2 { position: relative; width: 285px; height: 61px; line-height: 62px; border: 1px solid #1e2a58; border-bottom-width: 3px; }
  .options { height: 470px; margin-top: -1px; background: #636363; padding: 53px 0 0 70px; }
  .option { height: 45px; display: flex; align-items: center; gap: 7px; font: 500 16px Montserrat, Inter, sans-serif; color: #1d1d1d; }
  .option.wide { gap: 11px; }
  .radio { width: 12px; height: 12px; border-radius: 50%; border: 1px solid #464646; background: #5d5d5d; display: flex; align-items: center; justify-content: center; margin-top: -2px; }
  .radio.checked::after { content: ''; width: 6px; height: 6px; border-radius: 50%; background: #282828; }
  .btn { display: flex; align-items: center; justify-content: center; gap: 4px; height: 50px; color: #777; font: 14px 'Open Sans', sans-serif; }
  .btn svg { width: 14px; height: 14px; }
  .back { width: 170px; background: #2f2f2f; margin-top: 42px; }
  .book { width: 200px; background: #1c2956; margin-top: 30px; }

  .map { position: relative; margin-left: 398px; width: 1110px; height: 249px; border: 1px solid #535353; background: #5f5f5f; box-shadow: 0 0 16px rgba(0, 0, 0, .16); overflow: hidden; font-family: Roboto, sans-serif; }
  .canvas { width: 1108px; height: 247px; }
  .places { fill: #242424; stroke: #666; stroke-width: 4px; paint-order: stroke; stroke-opacity: .6; }
  .shield { font-size: 25px; font-weight: 700; fill: #777; text-anchor: middle; }
  .shield.light { fill: #333; font-weight: 400; }
  .city { font-size: 51px; font-weight: 500; fill: #1c1c1c; }
  .edge { font-size: 31px; font-weight: 500; fill: #1f1f1f; }
  .pin { font-size: 45px; fill: #777; text-anchor: middle; }
  .kinds { position: absolute; left: 10px; top: 10px; display: flex; height: 40px; line-height: 40px; font-size: 18px; background: #666; border-radius: 2px; box-shadow: 0 1px 4px rgba(0, 0, 0, .2); }
  .kinds b { width: 70px; text-align: center; font-weight: 500; color: #000; border-right: 1px solid #5c5c5c; }
  .kinds span { width: 99px; text-align: center; color: #272727; }
  .google { position: absolute; left: 6px; top: 224px; width: 64px; height: 24px; }
  .google text { font: 500 18.500px Roboto, sans-serif; fill: #606060; stroke: #777; stroke-width: 1px; }
  .tile { position: absolute; right: 10px; width: 40px; height: 40px; background: #666; border-radius: 2px; box-shadow: 0 1px 4px rgba(0, 0, 0, .2); display: flex; align-items: center; justify-content: center; }
  .full { top: 10px; }
  .full svg { width: 18px; height: 18px; }
  .man { top: 71px; }
  .man svg { width: 18px; height: 30px; }
  .zoom { top: 143px; height: 81px; }
  .zoom svg { width: 40px; height: 81px; }
  .legal { position: absolute; right: 0; bottom: 0; height: 14px; line-height: 15px; display: flex; gap: 12px; padding: 0 6px 0 7px; font-size: 10px; color: #1c1c1c; background: #626262; }

  .scroll { width: 15px; background: #f1f1f1; display: flex; flex-direction: column; align-items: center; }
  .scroll svg { width: 15px; height: 17px; }
  .thumb { width: 11px; height: 390px; background: #c1c1c1; margin: 253px 0 auto; }

  .powered { position: absolute; left: 16px; top: 929px; width: 119px; height: 26px; border: 1px solid #858585; border-radius: 5px; color: #909090; display: flex; align-items: center; justify-content: center; gap: 4px; font: 11px Lato, sans-serif; letter-spacing: .15px; padding: 0 2px 2px 0; }
  .powered b { font: 700 16px/20px 'Open Sans', sans-serif; letter-spacing: -.7px; margin-top: -3px; }

  .modal { position: absolute; left: 803px; top: 212px; width: 300px; height: 394px; background: #f5f5f7; border-radius: 6px; box-shadow: 0 12px 30px rgba(0, 0, 0, .6); font-family: 'Liberation Sans', sans-serif; }
  .logo { position: absolute; left: 114px; top: -27px; width: 72px; height: 72px; filter: drop-shadow(0 1px 1px rgba(0, 0, 0, .2)); }
  .close { position: absolute; left: 272.500px; top: 9.500px; width: 18px; height: 18px; }
  header { height: 115px; background: #e8e9eb; border-radius: 6px 6px 0 0; border-bottom: 1px solid #cfd0d2; padding-top: 55px; text-align: center; text-shadow: 0 1px 0 #fff; }
  h1 { font-size: 17px; line-height: 22px; font-weight: 700; color: #000; }
  header p { font-size: 13px; line-height: 22px; color: #63656b; }
  .form { padding: 37px 36px 0; }
  .field { height: 35px; display: flex; align-items: center; padding-left: 8px; font-size: 15px; color: #cfcfd2; background: #fff; }
  .field svg { width: 14px; height: 12px; margin-right: 6.500px; }
  .email { height: 37px; border: 1px solid #6f9fdc; border-radius: 4px; box-shadow: 0 0 6px 1px rgba(90, 145, 222, .8); }
  .card { margin-top: 18px; border: 1px solid #d4d5d8; border-top-color: #bfc0c3; border-radius: 4px; overflow: hidden; }
  .pair { display: flex; border-top: 1px solid #d4d5d8; }
  .pair .field { width: 112px; }
  .pair .cvc { width: 114px; border-left: 1px solid #d4d5d8; }
  .submit { margin-top: 36px; height: 37px; border-radius: 4px; background: linear-gradient(#45b1e8, #3097de); border-bottom: 1px solid #2579bd; color: #fff; font-weight: 700; font-size: 17px; line-height: 35px; text-align: center; text-indent: -1px; text-shadow: 0 -1px 0 rgba(40, 100, 160, .4); }
</style>
